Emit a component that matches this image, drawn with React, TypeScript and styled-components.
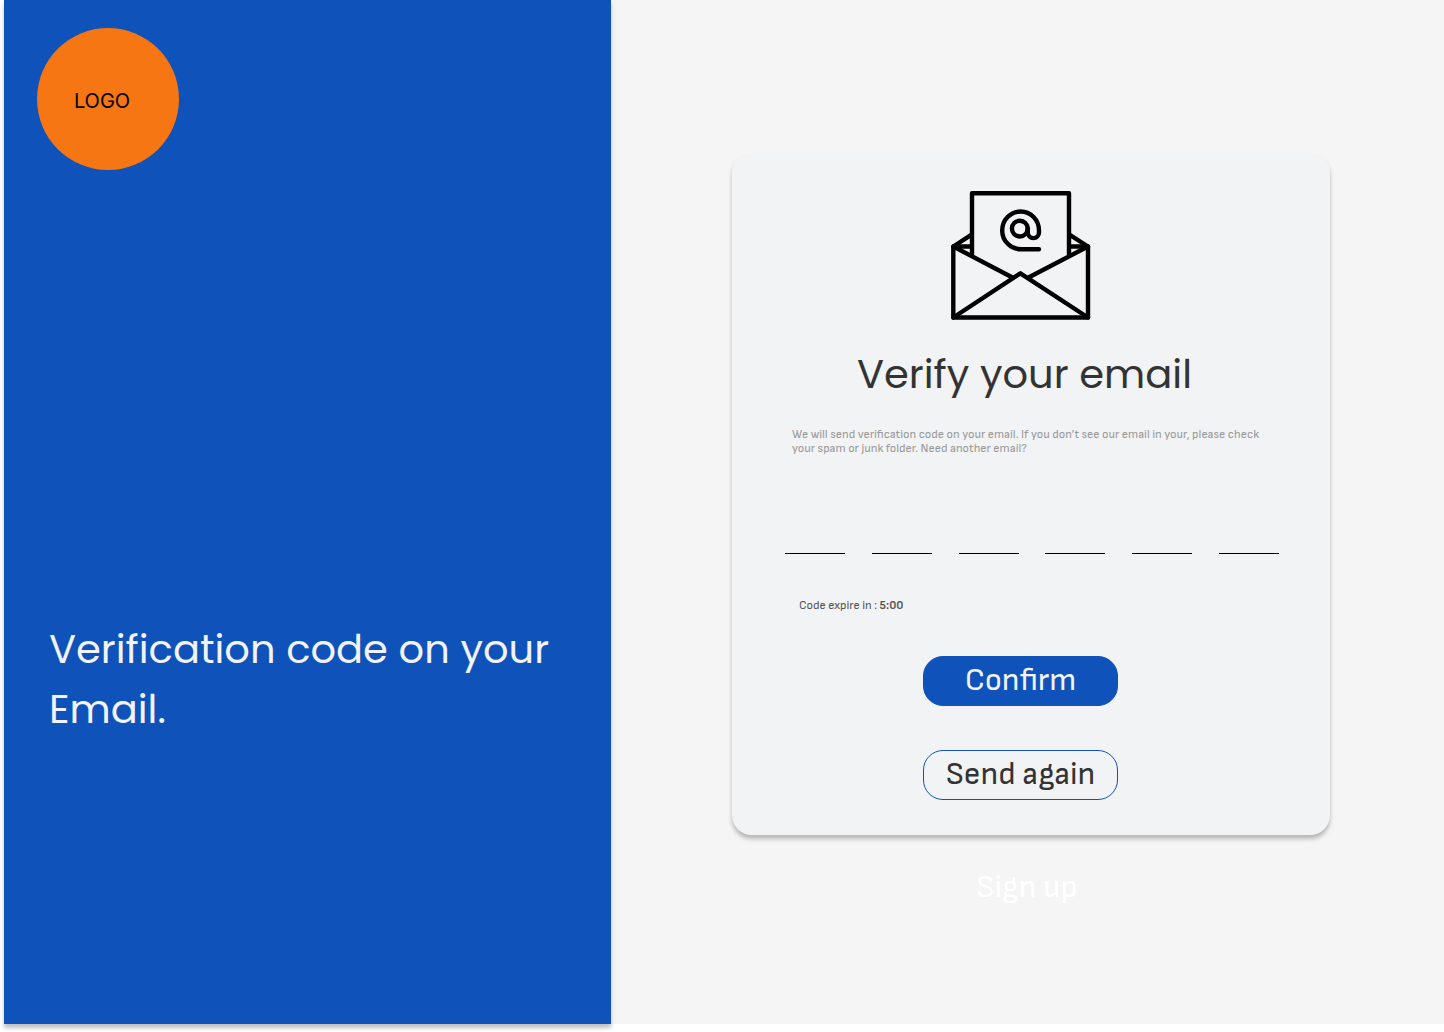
import React from "react";
import styled, { createGlobalStyle, css } from "styled-components";

const color = {
  blue: "#0f52ba",
  orange: "#f57613",
  canvas: "#f5f5f5",
  card: "#f1f3f5",
  ink: "#333333",
};

const display = `Poppins, Inter, "Open Sans", sans-serif`;
const body = `"Sofia Sans", Roboto, "Liberation Sans", sans-serif`;

const GlobalStyle = createGlobalStyle`
  *, *::before, *::after { box-sizing: border-box; }
  body { margin: 0; background: #ffffff; }
`;

const Page = styled.main`
  display: grid;
  grid-template-columns: 607fr 833fr;
  min-height: calc(100vh - 8px);
  margin: 0 0 8px 4px;
  background: ${color.canvas};
`;

const Brand = styled.section`
  display: flex;
  flex-direction: column;
  padding: 28px 33px;
  background: ${color.blue};
  box-shadow: 0 4px 4px rgba(0, 0, 0, 0.25);
`;

const Logo = styled.div`
  display: flex;
  align-items: center;
  justify-content: center;
  width: 142px;
  height: 142px;
  padding: 4px 12px 0 0;
  border-radius: 50%;
  background: ${color.orange};
  color: #000000;
  font: 400 20px/24px Inter, sans-serif;
`;

const Tagline = styled.h1`
  margin: 449px 0 0;
  padding-left: 12px;
  color: ${color.card};
  font: 400 40px/60px ${display};
`;

const Main = styled.section`
  display: flex;
  flex-direction: column;
  align-items: center;
  padding: 153px 114px 0 121px;
`;

const Card = styled.form`
  display: flex;
  flex-direction: column;
  width: 100%;
  max-width: 720px;
  padding: 37px 51px 35px 53px;
  border-radius: 20px;
  background: ${color.card};
  box-shadow: 0 4px 4px rgba(0, 0, 0, 0.25);
`;

const IconRow = styled.div`
  display: flex;
  justify-content: center;
  padding-right: 23px;
`;

const Intro = styled.div`
  padding: 24px 16px 0 7px;
`;

const Title = styled.h2`
  margin: 0;
  padding-right: 6px;
  color: ${color.ink};
  font: 400 40px/60px ${display};
  text-align: center;
`;

const Hint = styled.p`
  margin: 24px 0 0;
  color: #999999;
  font: 400 12px/14px ${body};
`;

const Code = styled.fieldset`
  display: flex;
  justify-content: space-between;
  margin: 58px 0 0;
  padding: 0;
  border: 0;
`;

const Digit = styled.input`
  width: 60px;
  height: 40px;
  padding: 0;
  border: 0;
  border-bottom: 1px solid #000000;
  border-radius: 0;
  outline: 0;
  background: transparent;
  color: ${color.ink};
  font: 400 32px/38px ${body};
  text-align: center;
`;

const Expiry = styled.p`
  margin: 45px 0 0;
  padding-left: 14px;
  color: #555555;
  font: 400 12px/14px ${body};
`;

const Actions = styled.div`
  display: flex;
  flex-direction: column;
  align-items: center;
  gap: 44px;
  padding: 43px 23px 0 0;
`;

const label = css`
  font: 400 32px/38px ${body};
`;

const Button = styled.button<{ $outlined?: boolean }>`
  width: 195px;
  height: 50px;
  padding: 0;
  border: 1px solid ${color.blue};
  border-radius: 20px;
  background: ${(p) => (p.$outlined ? "transparent" : color.blue)};
  color: ${(p) => (p.$outlined ? color.ink : color.card)};
  cursor: pointer;
  ${label}
`;

const SignUp = styled.a`
  margin-top: 34px;
  padding-right: 8px;
  color: #ffffff;
  text-decoration: none;
  ${label}
`;

const Envelope = () => (
  <svg width="140" height="130" viewBox="0 0 140 130" fill="none" stroke="#000" strokeWidth="4.4" strokeLinejoin="round" strokeLinecap="round" aria-hidden="true">
    <path d="M21 65V3.3H118V65" strokeLinecap="butt" />
    <path d="M21 44.3L2.3 56.5V127.5H137V56.5L118 44.3" strokeLinecap="butt" />
    <path d="M2.3 56.5H21M137 56.5H118" strokeLinecap="butt" />
    <path d="M2.3 56.5L61 87.3M137 56.5L78 87.3" />
    <path d="M2.3 127.5L69.4 83.3L137 127.5" />
    <circle cx="68.8" cy="38.6" r="7.9" />
    <path d="M88 59.3H70A18.8 18.9 0 0 1 51.2 40.4A18.4 18.9 0 0 1 88 40.4V42.5A5.6 5.6 0 0 1 76.8 42.5V38.6" />
  </svg>
);

export default function App() {
  return (
    <>
      <GlobalStyle />
      <Page>
        <Brand>
          <Logo>LOGO</Logo>
          <Tagline>Verification code on your Email.</Tagline>
        </Brand>
        <Main>
          <Card onSubmit={(e) => e.preventDefault()}>
            <IconRow>
              <Envelope />
            </IconRow>
            <Intro>
              <Title>Verify your email</Title>
              <Hint>
                We will send verification code on your email. If you don’t see our email in your, please check your spam or
                junk folder. Need another email?
              </Hint>
            </Intro>
            <Code aria-label="Verification code">
              {[1, 2, 3, 4, 5, 6].map((n) => (
                <Digit key={n} inputMode="numeric" maxLength={1} aria-label={`Digit ${n}`} />
              ))}
            </Code>
            <Expiry>
              Code expire in : <strong>5:00</strong>
            </Expiry>
            <Actions>
              <Button type="submit">Confirm</Button>
              <Button type="button" $outlined>
                Send again
              </Button>
            </Actions>
          </Card>
          <SignUp href="#signup">Sign up</SignUp>
        </Main>
      </Page>
    </>
  );
}
